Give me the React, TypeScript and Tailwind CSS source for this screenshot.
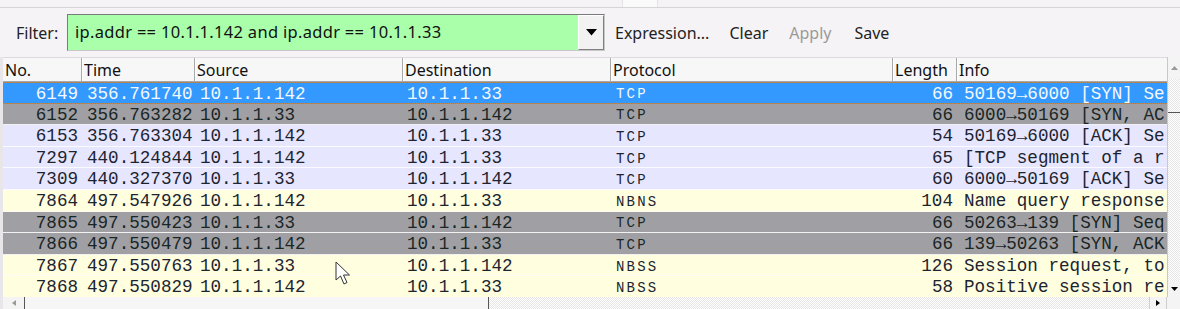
import React from "react";

type Row = {
  no: string;
  time: string;
  src: string;
  dst: string;
  proto: string;
  len: string;
  info: string;
  kind: "sel" | "gray" | "lav" | "yel";
};

const rows: Row[] = [
  { no: "6149", time: "356.761740", src: "10.1.1.142", dst: "10.1.1.33", proto: "TCP", len: "66", info: "50169→6000 [SYN] Se", kind: "sel" },
  { no: "6152", time: "356.763282", src: "10.1.1.33", dst: "10.1.1.142", proto: "TCP", len: "66", info: "6000→50169 [SYN, AC", kind: "gray" },
  { no: "6153", time: "356.763304", src: "10.1.1.142", dst: "10.1.1.33", proto: "TCP", len: "54", info: "50169→6000 [ACK] Se", kind: "lav" },
  { no: "7297", time: "440.124844", src: "10.1.1.142", dst: "10.1.1.33", proto: "TCP", len: "65", info: "[TCP segment of a r", kind: "lav" },
  { no: "7309", time: "440.327370", src: "10.1.1.33", dst: "10.1.1.142", proto: "TCP", len: "60", info: "6000→50169 [ACK] Se", kind: "lav" },
  { no: "7864", time: "497.547926", src: "10.1.1.142", dst: "10.1.1.33", proto: "NBNS", len: "104", info: "Name query response", kind: "yel" },
  { no: "7865", time: "497.550423", src: "10.1.1.33", dst: "10.1.1.142", proto: "TCP", len: "66", info: "50263→139 [SYN] Seq", kind: "gray" },
  { no: "7866", time: "497.550479", src: "10.1.1.142", dst: "10.1.1.33", proto: "TCP", len: "66", info: "139→50263 [SYN, ACK", kind: "gray" },
  { no: "7867", time: "497.550763", src: "10.1.1.33", dst: "10.1.1.142", proto: "NBSS", len: "126", info: "Session request, to", kind: "yel" },
  { no: "7868", time: "497.550829", src: "10.1.1.142", dst: "10.1.1.33", proto: "NBSS", len: "58", info: "Positive session re", kind: "yel" },
];

const rowCls: Record<Row["kind"], string> = {
  sel: "bg-[#3399ff] text-[#f4f8ff] border-y border-dotted border-y-[#b88a5a]",
  gray: "bg-[#a0a0a4] text-[#1a2626] border-b border-[#f2f2f2]",
  lav: "bg-[#e7e6ff] text-[#1c2430] border-b border-[#fbfbff]",
  yel: "bg-[#ffffe0] text-[#1c2430] border-b border-[#fbfbf4]",
};

const dither =
  "bg-[repeating-conic-gradient(#e6e6e6_0_25%,#ffffff_0_50%)] bg-[length:2px_2px]";

function HeaderCell({ label, w, last }: { label: string; w: string; last?: boolean }) {
  return (
    <div
      className={`${w} h-full flex items-center pl-[2px] pt-[1px] ${
        last ? "" : "border-r border-r-[#a8a8a8] shadow-[1px_0_0_#ffffff]"
      }`}
    >
      <span className="text-[16px] text-[#111]">{label}</span>
    </div>
  );
}

export default function App() {
  return (
    <div
      className="relative w-[1180px] h-[309px] bg-[#f5f3f5] overflow-hidden flex flex-col"
      style={{ fontFamily: '"Noto Sans", "Open Sans", sans-serif' }}
    >
      {/* top strip */}
      <div className="h-[8px] border-b border-[#d6d4d6] flex shrink-0">
        <div className="ml-[622px] w-[36px] h-[7px] bg-[#fbfafb] border-x border-[#e4e2e4]" />
      </div>

      {/* filter row */}
      <div className="h-[49px] flex items-center shrink-0">
        <span className="ml-[16px] w-[51px] text-[16px] text-[#222]">Filter:</span>
        <div className="w-[538px] h-[37px] flex border border-t-[#7a7a7a] border-l-[#7a7a7a] border-b-[#c8c8c8] border-r-[#c8c8c8] bg-[#aaffaa]">
          <div className="flex-1 flex items-center pl-[7px] text-[16.5px] tracking-[0.3px] text-[#111] whitespace-nowrap">
            ip.addr == 10.1.1.142 and ip.addr == 10.1.1.33
          </div>
          <div className="w-[26px] h-full bg-[#f2f2f2] border border-t-[#ffffff] border-l-[#ffffff] border-b-[#808080] border-r-[#808080] flex items-center justify-center">
            <svg width="11" height="7" viewBox="0 0 11 7">
              <polygon points="0,0 11,0 5.5,6.5" fill="#000" />
            </svg>
          </div>
        </div>
        <span className="ml-[10px] text-[16px] text-[#222]">Expression...</span>
        <span className="ml-[20px] text-[16px] text-[#222]">Clear</span>
        <span className="ml-[21px] text-[16px] text-[#9a9a9a]">Apply</span>
        <span className="ml-[23px] text-[16px] text-[#222]">Save</span>
      </div>

      {/* packet list */}
      <div className="flex-1 flex flex-col border-l-[3px] border-[#e8e6e8] min-h-0">
        <div className="flex-1 flex min-h-0">
          <div className="flex-1 flex flex-col min-w-0">
            {/* header */}
            <div className="h-[25px] flex border-t border-[#dcdadc] border-b border-b-[#a8a8a8] bg-[#f8f7f8] shrink-0">
              <HeaderCell label="No." w="w-[79px]" />
              <HeaderCell label="Time" w="w-[113px]" />
              <HeaderCell label="Source" w="w-[208px]" />
              <HeaderCell label="Destination" w="w-[208px]" />
              <HeaderCell label="Protocol" w="w-[282px]" />
              <HeaderCell label="Length" w="w-[64px]" />
              <HeaderCell label="Info" w="flex-1" last />
            </div>
            {/* rows */}
            <div
              className="flex flex-col"
              style={{ fontFamily: '"Liberation Mono", "DejaVu Sans Mono", monospace' }}
            >
              {rows.map((r) => (
                <div
                  key={r.no}
                  className={`h-[21.6px] shrink-0 flex items-center pt-[3px] text-[17.6px] leading-none whitespace-nowrap overflow-hidden ${rowCls[r.kind]}`}
                >
                  <div className="w-[79px] text-right pr-[4px]">{r.no}</div>
                  <div className="w-[113px] pl-[5px]">{r.time}</div>
                  <div className="w-[208px] pl-[5px]">{r.src}</div>
                  <div className="w-[208px] pl-[4px]">{r.dst}</div>
                  <div className="w-[282px] pl-[5px] text-[14px] tracking-[2.2px]">{r.proto}</div>
                  <div className="w-[64px] text-right pr-[4px]">{r.len}</div>
                  <div className="flex-1 pl-[7px] overflow-hidden">{r.info}</div>
                </div>
              ))}
            </div>
          </div>
          {/* vertical scrollbar */}
          <div className={`w-[13px] flex flex-col border-l border-[#c8c8c8] ${dither}`}>
            <div className="h-[22px] bg-[#f4f4f4] flex items-center justify-center">
              <svg width="7" height="4" viewBox="0 0 7 4">
                <polygon points="0,4 7,4 3.5,0" fill="#9a9a9a" />
              </svg>
            </div>
            <div className="h-[33px]" />
            <div className="h-[1px] bg-[#555]" />
            <div className="flex-1" />
            <div className="h-[16px] bg-[#f4f4f4] flex items-center justify-center">
              <svg width="7" height="4" viewBox="0 0 7 4">
                <polygon points="0,0 7,0 3.5,4" fill="#000" />
              </svg>
            </div>
          </div>
        </div>
        {/* horizontal scrollbar */}
        <div className="h-[12px] flex shrink-0">
          <div className="w-[22px] bg-[#f4f4f4] border-r border-[#555] flex items-center justify-center">
            <svg width="4" height="6" viewBox="0 0 4 6">
              <polygon points="4,0 4,6 0,3" fill="#9a9a9a" />
            </svg>
          </div>
          <div className="w-[464px] bg-[#f6f6f6] border-r border-[#555]" />
          <div className={`flex-1 ${dither}`} />
          <div className="w-[18px] bg-[#f4f4f4] flex items-center justify-center border-x border-[#cfcfcf]">
            <svg width="4" height="6" viewBox="0 0 4 6">
              <polygon points="0,0 0,6 4,3" fill="#000" />
            </svg>
          </div>
          <div className="w-[13px] bg-[#f4f4f4]" />
        </div>
      </div>

      {/* mouse cursor */}
      <svg
        className="absolute left-[335px] top-[261px]"
        width="18"
        height="26"
        viewBox="0 0 18 26"
      >
        <path
          d="M1 1 L1 19 L5.5 15 L9 23 L12 21.5 L8.5 14 L14.5 14 Z"
          fill="#ffffff"
          stroke="#333"
          strokeWidth="1"
          strokeLinejoin="round"
        />
      </svg>
    </div>
  );
}
